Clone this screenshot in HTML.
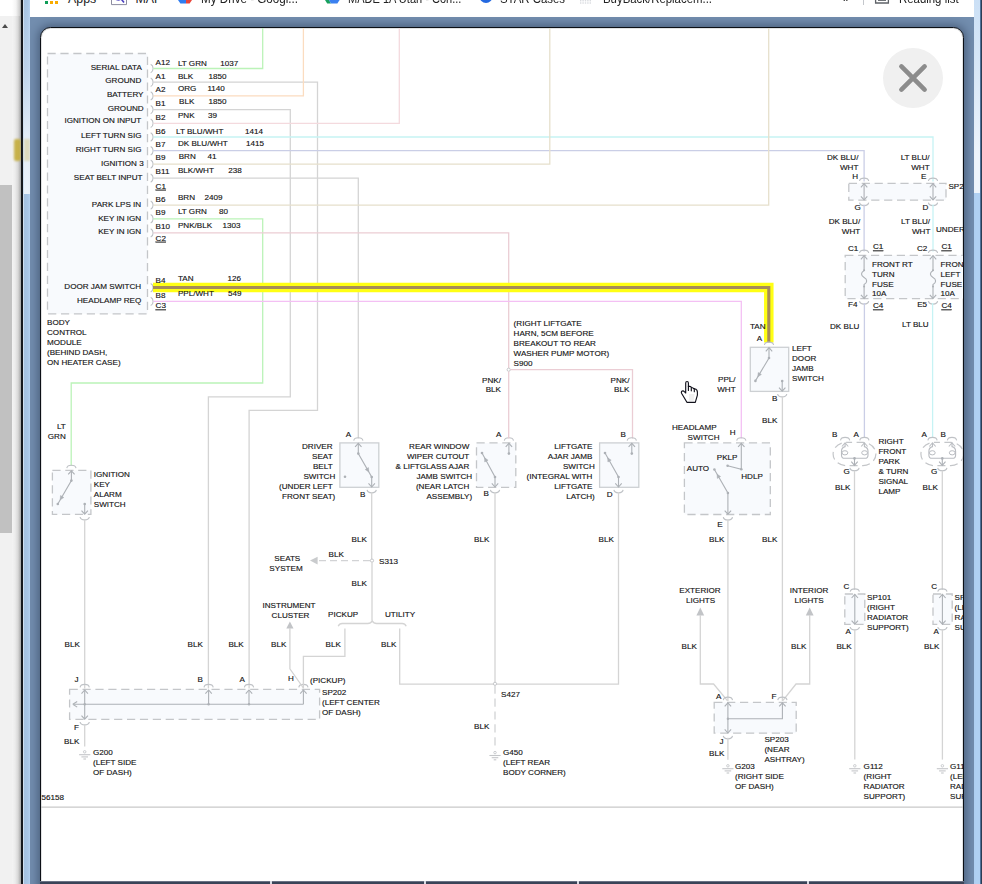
<!DOCTYPE html>
<html lang="en"><head><meta charset="utf-8"><title>Wiring diagram</title>
<style>
html,body{margin:0;padding:0;}
html{width:982px;height:884px;overflow:hidden;}
body{width:982px;height:884px;overflow:hidden;position:relative;background:#fff;font-family:"Liberation Sans",sans-serif;}
#root{position:absolute;left:0;top:0;width:982px;height:884px;overflow:hidden;background:#fff;}
.abs{position:absolute;}
#sb{left:0;top:0;width:14px;height:884px;background:#f1f1f1;}
#sbtop{left:0;top:0;width:21px;height:16px;background:#fff;}
#thumb{left:0;top:185px;width:12px;height:348px;background:#c1c1c1;}
#sbarrow{left:2px;top:23.8px;width:0;height:0;border-left:3.5px solid transparent;border-right:3.5px solid transparent;border-bottom:4px solid #4b4b4b;}
#shadow{left:12px;top:0;width:10px;height:884px;background:linear-gradient(90deg,#f4f4f4 0%,#ececec 30%,#d8d8d8 60%,#a8a8a8 88%,#707070 100%);}
#shadowtop{left:12px;top:0;width:10px;height:16px;background:linear-gradient(90deg,#ffffff 0%,#f4f4f4 40%,#d0d0d0 75%,#808080 100%);}
#yb1{left:14px;top:139px;width:7px;height:22px;background:#c5ad3c;border-radius:2px;filter:blur(1px);opacity:.9;}
#yb2{left:24px;top:139px;width:6px;height:22px;background:#d9cf9a;filter:blur(1px);opacity:.6;}
#wbl{left:21px;top:0;width:2px;height:884px;background:#15181d;}
#frl{left:23px;top:0;width:7px;height:884px;background:linear-gradient(90deg,#e4edf7 0%,#a4c1e0 22%,#a9c6e6 70%,#b6d3f1 100%);}
#frl2{left:24px;top:0;width:6px;height:194px;background:linear-gradient(180deg,rgba(232,240,249,0) 0%,rgba(232,240,249,.35) 35%,rgba(232,240,249,.9) 70%,rgba(235,242,250,1) 100%);}
#page{left:30px;top:0;width:944px;height:884px;background:#728dae;overflow:hidden;}
#bm{left:0;top:0;width:944px;height:17px;background:#fff;overflow:hidden;}
#bm span{position:absolute;top:-8.3px;font-size:12.4px;color:#222;white-space:nowrap;transform:scaleX(.92);transform-origin:0 0;}
#frr{left:973.7px;top:0;width:6.3px;height:884px;background:#b0d0f2;}
#frr2{left:973.7px;top:0;width:6.3px;height:193px;background:linear-gradient(180deg,rgba(236,243,250,.45) 0%,rgba(236,243,250,.7) 40%,rgba(238,244,251,1) 80%);}
#frr3{left:980px;top:0;width:2px;height:884px;background:linear-gradient(90deg,#5f8cbc,#1a2230);}
#modal{left:40px;top:27px;width:922px;height:900px;background:#fff;border:1px solid #0c1016;border-radius:10.5px;box-sizing:content-box;overflow:hidden;box-shadow:inset 0 0 0 1px rgba(12,16,22,.12),0 0 9px 2px rgba(20,32,56,.42);}
#dg{position:absolute;left:-41px;top:-28px;}
#dg text{font-family:"Liberation Sans",sans-serif;font-size:8.1px;fill:#141414;stroke:#141414;stroke-width:.14px;}
#botbar{left:40px;top:881px;width:924px;height:3px;background:linear-gradient(180deg,#8d95a5 0,#3a4458 40%);}
.tick{top:881px;width:2px;height:3px;background:#d8dce4;}
</style></head><body><div id="root">

<div class="abs" id="sb"></div><div class="abs" id="thumb"></div><div class="abs" id="shadow"></div><div class="abs" id="sbtop"></div><div class="abs" id="shadowtop"></div><div class="abs" id="sbarrow"></div>
<div class="abs" id="yb1"></div>
<div class="abs" id="wbl"></div><div class="abs" id="frl"></div><div class="abs" id="frl2"></div><div class="abs" id="yb2"></div>
<div class="abs" id="page"><div class="abs" id="bm">
<i class="abs" style="left:15px;top:1px;width:3.2px;height:3px;background:#0f9d58"></i><i class="abs" style="left:20px;top:1px;width:3.2px;height:3px;background:#f9ab00"></i><i class="abs" style="left:25px;top:1px;width:3.2px;height:3px;background:#f9ab00"></i><span style="left:38px;transform:scaleX(1)">Apps</span><svg class="abs" style="left:80px;top:0" width="18" height="6" viewBox="0 0 18 6"><path d="M1.5 0V4.6H16.5V0" fill="none" stroke="#8d8da0" stroke-width="1"/><path d="M4.5 -2.5a4 4 0 0 0 6.5 1.2L14 2.6" fill="none" stroke="#4a3fc0" stroke-width="1.6"/></svg><span style="left:105.5px;transform:scaleX(1)">MAF</span><svg class="abs" style="left:146px;top:0" width="18" height="5" viewBox="0 0 18 5"><path d="M2 0L4.4 3.6H10V0z" fill="#2f7df0"/><path d="M10 0V3.6H13.6L16 0z" fill="#e9453a"/></svg><span style="left:171px;transform:scaleX(.94)">My Drive - Googl...</span><svg class="abs" style="left:293px;top:0" width="18" height="5" viewBox="0 0 18 5"><path d="M2 0L4.2 3.6H8L6 0z" fill="#18a05e"/><path d="M6 0L8 3.6H14.4L16.6 0z" fill="#3a80f0"/></svg><span style="left:318px;transform:scaleX(.89)">MADE 1A Utah - Con...</span><svg class="abs" style="left:448px;top:0" width="16" height="5" viewBox="0 0 16 5"><circle cx="8" cy="-3.6" r="6.6" fill="#2468e0"/></svg><span style="left:470px">STAR Cases</span><svg class="abs" style="left:547px;top:0" width="18" height="6" viewBox="0 0 18 6"><path d="M3 0.8H15M3 3H15" stroke="#c9ccd2" stroke-width="1" stroke-dasharray="1.4 1"/></svg><span style="left:573px">BuyBack/Replacem...</span><span style="left:813px;top:-9.5px">»</span><i class="abs" style="left:832.6px;top:0;width:1px;height:5px;background:#c4c7cc"></i><svg class="abs" style="left:844px;top:0" width="16" height="5" viewBox="0 0 16 5"><path d="M1.6 0V3H14.4V0" fill="none" stroke="#5f6368" stroke-width="1.3"/><path d="M4 0.4H12" stroke="#5f6368" stroke-width="1"/></svg><span style="left:869px">Reading list</span>
</div></div>
<div class="abs" id="frr"></div><div class="abs" id="frr2"></div><div class="abs" id="frr3"></div>
<div class="abs" id="modal"><svg id="dg" width="982" height="940" viewBox="0 0 982 940">
<rect x="47.5" y="53.5" width="100.0" height="260.3" fill="#f8fafd" stroke="#c4c6c9" stroke-width="1.3" stroke-dasharray="8.2 4.7"/>
<path d="M150.7 64.3 q2.4 1.2 2.4 4.2 q0 3 -2.4 4.2" stroke="#bfc2c6" stroke-width="1.1" fill="none"/>
<path d="M150.7 78.0 q2.4 1.2 2.4 4.2 q0 3 -2.4 4.2" stroke="#bfc2c6" stroke-width="1.1" fill="none"/>
<path d="M150.7 91.7 q2.4 1.2 2.4 4.2 q0 3 -2.4 4.2" stroke="#bfc2c6" stroke-width="1.1" fill="none"/>
<path d="M150.7 105.4 q2.4 1.2 2.4 4.2 q0 3 -2.4 4.2" stroke="#bfc2c6" stroke-width="1.1" fill="none"/>
<path d="M150.7 119.1 q2.4 1.2 2.4 4.2 q0 3 -2.4 4.2" stroke="#bfc2c6" stroke-width="1.1" fill="none"/>
<path d="M150.7 132.8 q2.4 1.2 2.4 4.2 q0 3 -2.4 4.2" stroke="#bfc2c6" stroke-width="1.1" fill="none"/>
<path d="M150.7 146.5 q2.4 1.2 2.4 4.2 q0 3 -2.4 4.2" stroke="#bfc2c6" stroke-width="1.1" fill="none"/>
<path d="M150.7 159.9 q2.4 1.2 2.4 4.2 q0 3 -2.4 4.2" stroke="#bfc2c6" stroke-width="1.1" fill="none"/>
<path d="M150.7 173.9 q2.4 1.2 2.4 4.2 q0 3 -2.4 4.2" stroke="#bfc2c6" stroke-width="1.1" fill="none"/>
<path d="M150.7 200.9 q2.4 1.2 2.4 4.2 q0 3 -2.4 4.2" stroke="#bfc2c6" stroke-width="1.1" fill="none"/>
<path d="M150.7 214.6 q2.4 1.2 2.4 4.2 q0 3 -2.4 4.2" stroke="#bfc2c6" stroke-width="1.1" fill="none"/>
<path d="M150.7 228.7 q2.4 1.2 2.4 4.2 q0 3 -2.4 4.2" stroke="#bfc2c6" stroke-width="1.1" fill="none"/>
<path d="M150.7 283.5 q2.4 1.2 2.4 4.2 q0 3 -2.4 4.2" stroke="#bfc2c6" stroke-width="1.1" fill="none"/>
<path d="M150.7 297.2 q2.4 1.2 2.4 4.2 q0 3 -2.4 4.2" stroke="#bfc2c6" stroke-width="1.1" fill="none"/>
<path d="M153.4 68.5 L262.7 68.5 L262.7 20.0" stroke="#bbf3b8" stroke-width="1.3" fill="none" />
<path d="M153.4 82.2 L317.5 82.2 L317.5 410.4 L249.1 410.4 L249.1 688.5" stroke="#d4d4d4" stroke-width="1.3" fill="none" />
<path d="M153.4 95.9 L303.4 95.9 L303.4 20.0" stroke="#fbdcc0" stroke-width="1.3" fill="none" />
<path d="M153.4 109.6 L290.3 109.6 L290.3 396.9 L208.4 396.9 L208.4 688.5" stroke="#d4d4d4" stroke-width="1.3" fill="none" />
<path d="M153.4 123.3 L399.3 123.3 L399.3 20.0" stroke="#f4dade" stroke-width="1.3" fill="none" />
<path d="M153.4 137.0 L933.0 137.0 L933.0 181.5" stroke="#c6f3f4" stroke-width="1.3" fill="none" />
<path d="M153.4 150.7 L864.1 150.7 L864.1 181.5" stroke="#cacee6" stroke-width="1.3" fill="none" />
<path d="M153.4 164.1 L549.8 164.1 L549.8 20.0" stroke="#e6e0cc" stroke-width="1.3" fill="none" />
<path d="M153.4 178.1 L358.3 178.1 L358.3 438.5" stroke="#d4d4d4" stroke-width="1.3" fill="none" />
<path d="M153.4 205.1 L768.7 205.1 L768.7 20.0" stroke="#e6e0cc" stroke-width="1.3" fill="none" />
<path d="M153.4 218.8 L262.7 218.8 L262.7 383.0 L71.2 383.0 L71.2 466.0" stroke="#bbf3b8" stroke-width="1.3" fill="none" />
<path d="M153.4 232.9 L508.7 232.9 L508.7 368.0" stroke="#ebcdd4" stroke-width="1.3" fill="none" />
<path d="M153.4 301.4 L741.3 301.4 L741.3 438.5" stroke="#f4c0f4" stroke-width="1.3" fill="none" />
<path d="M153.0 287.5 L768.8 287.5 L768.8 342.6" stroke="#ffff14" stroke-width="9.5" fill="none" stroke-linejoin="miter"/>
<path d="M153.0 287.5 L768.8 287.5 L768.8 342.6" stroke="#a68c58" stroke-width="3.1" fill="none" stroke-linejoin="miter"/>
<rect x="52.4" y="470.4" width="38.5" height="44.0" fill="#f8fafd" stroke="#c4c6c9" stroke-width="1.3" stroke-dasharray="8.2 4.7"/>
<path d="M66.8 468.1 q0.5 -2.9 4.6 -2.9 q4.1 0 4.6 2.9" stroke="#bfc2c6" stroke-width="1.15" fill="none"/>
<path d="M68.2 474.4 L71.4 470.8 L74.6 474.4" stroke="#adb1b6" stroke-width="1.1" fill="none"/>
<path d="M71.4 470.8 L71.4 480.6 L57.8 504.0" stroke="#adb1b6" stroke-width="1.1" fill="none" />
<circle cx="71.4" cy="480.6" r="1.3" fill="#adb1b6"/>
<circle cx="57.8" cy="504.0" r="1.3" fill="#adb1b6"/>
<path d="M60.2 499.8 L60.5 495.5 L63.8 497.5 z" fill="#adb1b6" stroke="#adb1b6" stroke-width="0.5"/>
<circle cx="84.7" cy="504.0" r="1.3" fill="#adb1b6"/>
<path d="M84.7 504.0 L84.7 514.0" stroke="#adb1b6" stroke-width="1.1" fill="none" />
<path d="M81.5 510.6 L84.7 514.2 L87.9 510.6" stroke="#adb1b6" stroke-width="1.1" fill="none"/>
<path d="M80.1 517.0 q0.5 2.9 4.6 2.9 q4.1 0 4.6 -2.9" stroke="#bfc2c6" stroke-width="1.15" fill="none"/>
<path d="M84.7 519.0 L84.7 688.5" stroke="#d4d4d4" stroke-width="1.3" fill="none" />
<rect x="69.6" y="689.4" width="250.0" height="30.0" fill="#f8fafd" stroke="#c4c6c9" stroke-width="1.3" stroke-dasharray="8.2 4.7"/>
<path d="M80.1 687.3 q0.5 -2.9 4.6 -2.9 q4.1 0 4.6 2.9" stroke="#bfc2c6" stroke-width="1.15" fill="none"/>
<path d="M81.5 693.6 L84.7 690.0 L87.9 693.6" stroke="#adb1b6" stroke-width="1.1" fill="none"/>
<path d="M84.7 690.0 L84.7 704.3" stroke="#adb1b6" stroke-width="1.1" fill="none" />
<path d="M204.0 687.3 q0.5 -2.9 4.6 -2.9 q4.1 0 4.6 2.9" stroke="#bfc2c6" stroke-width="1.15" fill="none"/>
<path d="M205.4 693.6 L208.6 690.0 L211.8 693.6" stroke="#adb1b6" stroke-width="1.1" fill="none"/>
<path d="M208.6 690.0 L208.6 704.3" stroke="#adb1b6" stroke-width="1.1" fill="none" />
<path d="M244.4 687.3 q0.5 -2.9 4.6 -2.9 q4.1 0 4.6 2.9" stroke="#bfc2c6" stroke-width="1.15" fill="none"/>
<path d="M245.8 693.6 L249.0 690.0 L252.2 693.6" stroke="#adb1b6" stroke-width="1.1" fill="none"/>
<path d="M249.0 690.0 L249.0 704.3" stroke="#adb1b6" stroke-width="1.1" fill="none" />
<path d="M298.8 687.3 q0.5 -2.9 4.6 -2.9 q4.1 0 4.6 2.9" stroke="#bfc2c6" stroke-width="1.15" fill="none"/>
<path d="M300.2 693.6 L303.4 690.0 L306.6 693.6" stroke="#adb1b6" stroke-width="1.1" fill="none"/>
<path d="M303.4 690.0 L303.4 704.3" stroke="#adb1b6" stroke-width="1.1" fill="none" />
<path d="M74.0 704.3 L303.4 704.3" stroke="#adb1b6" stroke-width="1.1" fill="none" />
<path d="M72.8 704.3 l4.4 -2.8 M72.8 704.3 l4.4 2.8" stroke="#adb1b6" stroke-width="1.1" fill="none"/>
<circle cx="84.7" cy="704.3" r="1.2" fill="#adb1b6"/>
<circle cx="208.6" cy="704.3" r="1.2" fill="#adb1b6"/>
<circle cx="249.0" cy="704.3" r="1.2" fill="#adb1b6"/>
<path d="M84.7 704.3 L84.7 719.0" stroke="#adb1b6" stroke-width="1.1" fill="none" />
<path d="M81.5 715.6 L84.7 719.2 L87.9 715.6" stroke="#adb1b6" stroke-width="1.1" fill="none"/>
<path d="M80.1 722.0 q0.5 2.9 4.6 2.9 q4.1 0 4.6 -2.9" stroke="#bfc2c6" stroke-width="1.15" fill="none"/>
<path d="M84.7 724.4 L84.7 746.4" stroke="#d4d4d4" stroke-width="1.3" fill="none" />
<circle cx="84.7" cy="751.8" r="1.25" fill="#fff" stroke="#c4c6c9" stroke-width="0.9"/>
<path d="M79.1 754.7 L90.3 754.7" stroke="#c4c6c9" stroke-width="1.1" fill="none" />
<path d="M81.4 756.9 L88.0 756.9" stroke="#c4c6c9" stroke-width="1.1" fill="none" />
<path d="M83.4 759.0 L86.0 759.0" stroke="#c4c6c9" stroke-width="1.1" fill="none" />
<path d="M289.9 621.4 l3.6 7.2 h-7.2z" fill="#c2c4c7"/>
<path d="M289.9 628.0 L289.9 668.8 L303.4 688.0" stroke="#d4d4d4" stroke-width="1.3" fill="none" />
<path d="M338.2 626.2 q1.2 -2.7 4 -2.7 h25.6 q3 0 4.4 -2.6 q1.4 2.6 4.4 2.6 h25.6 q2.8 0 4 2.7" stroke="#d4d4d4" stroke-width="1.3" fill="none"/>
<path d="M344.9 628.5 L344.9 656.3 L303.4 656.3 L303.4 688.5" stroke="#d4d4d4" stroke-width="1.3" fill="none" />
<path d="M399.7 628.5 L399.7 684.2 L493.4 684.2" stroke="#d4d4d4" stroke-width="1.3" fill="none" />
<rect x="339.9" y="442.9" width="38.9" height="44.4" fill="#f8fafd" stroke="#cdd0d3" stroke-width="1.3"/>
<path d="M353.7 440.6 q0.5 -2.9 4.6 -2.9 q4.1 0 4.6 2.9" stroke="#bfc2c6" stroke-width="1.15" fill="none"/>
<path d="M355.1 446.9 L358.3 443.3 L361.5 446.9" stroke="#adb1b6" stroke-width="1.1" fill="none"/>
<path d="M358.3 443.3 L358.3 453.6 L371.7 477.0 L371.7 486.8" stroke="#adb1b6" stroke-width="1.1" fill="none" />
<circle cx="358.3" cy="453.6" r="1.3" fill="#adb1b6"/>
<circle cx="371.7" cy="477.0" r="1.3" fill="#adb1b6"/>
<circle cx="345.0" cy="476.8" r="1.3" fill="#adb1b6"/>
<path d="M368.8 471.9 L365.2 469.5 L368.5 467.6 z" fill="#adb1b6" stroke="#adb1b6" stroke-width="0.5"/>
<path d="M368.5 483.4 L371.7 487.0 L374.9 483.4" stroke="#adb1b6" stroke-width="1.1" fill="none"/>
<path d="M367.1 489.9 q0.5 2.9 4.6 2.9 q4.1 0 4.6 -2.9" stroke="#bfc2c6" stroke-width="1.15" fill="none"/>
<path d="M371.7 492.0 L371.7 559.0" stroke="#d4d4d4" stroke-width="1.3" fill="none" />
<circle cx="372.0" cy="560.6" r="1.6" fill="#fff" stroke="#c4c6c9" stroke-width="1"/>
<path d="M319.0 560.6 L370.2 560.6" stroke="#d2d3d5" stroke-width="1.3" fill="none" stroke-dasharray="7 4"/>
<path d="M310.0 560.6 l7.6 -3.8 v7.6z" fill="#c9cbcd"/>
<path d="M372.0 562.2 L372.0 620.5" stroke="#d4d4d4" stroke-width="1.3" fill="none" />
<rect x="476.5" y="442.9" width="39.3" height="44.4" fill="#f8fafd" stroke="#c4c6c9" stroke-width="1.3" stroke-dasharray="8.2 4.7"/>
<path d="M504.3 440.6 q0.5 -2.9 4.6 -2.9 q4.1 0 4.6 2.9" stroke="#bfc2c6" stroke-width="1.15" fill="none"/>
<path d="M505.7 446.9 L508.9 443.3 L512.1 446.9" stroke="#adb1b6" stroke-width="1.1" fill="none"/>
<path d="M508.9 443.3 L508.9 453.6" stroke="#adb1b6" stroke-width="1.1" fill="none" />
<circle cx="508.9" cy="453.6" r="1.3" fill="#adb1b6"/>
<circle cx="482.0" cy="453.0" r="1.3" fill="#adb1b6"/>
<circle cx="495.0" cy="477.0" r="1.3" fill="#adb1b6"/>
<path d="M482.0 453.0 L495.0 477.0 L495.0 486.8" stroke="#adb1b6" stroke-width="1.1" fill="none" />
<path d="M484.6 457.8 L488.1 460.2 L484.7 462.0 z" fill="#adb1b6" stroke="#adb1b6" stroke-width="0.5"/>
<path d="M491.8 483.4 L495.0 487.0 L498.2 483.4" stroke="#adb1b6" stroke-width="1.1" fill="none"/>
<path d="M490.4 489.9 q0.5 2.9 4.6 2.9 q4.1 0 4.6 -2.9" stroke="#bfc2c6" stroke-width="1.15" fill="none"/>
<path d="M495.0 492.0 L495.0 682.2" stroke="#d4d4d4" stroke-width="1.3" fill="none" />
<circle cx="508.7" cy="369.7" r="1.6" fill="#fff" stroke="#c4c6c9" stroke-width="1"/>
<path d="M510.4 369.7 L632.5 369.7 L632.5 438.5" stroke="#ebcdd4" stroke-width="1.3" fill="none" />
<path d="M508.7 371.4 L508.7 438.5" stroke="#ebcdd4" stroke-width="1.3" fill="none" />
<rect x="599.6" y="442.9" width="39.2" height="44.4" fill="#f8fafd" stroke="#cdd0d3" stroke-width="1.3"/>
<path d="M627.2 440.6 q0.5 -2.9 4.6 -2.9 q4.1 0 4.6 2.9" stroke="#bfc2c6" stroke-width="1.15" fill="none"/>
<path d="M628.6 446.9 L631.8 443.3 L635.0 446.9" stroke="#adb1b6" stroke-width="1.1" fill="none"/>
<path d="M631.8 443.3 L631.8 453.6" stroke="#adb1b6" stroke-width="1.1" fill="none" />
<circle cx="631.8" cy="453.6" r="1.3" fill="#adb1b6"/>
<circle cx="605.0" cy="453.0" r="1.3" fill="#adb1b6"/>
<circle cx="618.5" cy="477.0" r="1.3" fill="#adb1b6"/>
<path d="M605.0 453.0 L618.5 477.0 L618.5 486.8" stroke="#adb1b6" stroke-width="1.1" fill="none" />
<path d="M607.7 457.8 L611.2 460.2 L607.9 462.0 z" fill="#adb1b6" stroke="#adb1b6" stroke-width="0.5"/>
<path d="M615.3 483.4 L618.5 487.0 L621.7 483.4" stroke="#adb1b6" stroke-width="1.1" fill="none"/>
<path d="M613.9 489.9 q0.5 2.9 4.6 2.9 q4.1 0 4.6 -2.9" stroke="#bfc2c6" stroke-width="1.15" fill="none"/>
<path d="M618.5 492.0 L618.5 684.2 L496.6 684.2" stroke="#d4d4d4" stroke-width="1.3" fill="none" />
<circle cx="495.0" cy="683.8" r="1.6" fill="#fff" stroke="#c4c6c9" stroke-width="1"/>
<path d="M495.0 685.6 L495.0 746.4" stroke="#d2d3d5" stroke-width="1.3" fill="none" stroke-dasharray="8.2 4.7"/>
<circle cx="495.0" cy="752.6" r="1.25" fill="#fff" stroke="#c4c6c9" stroke-width="0.9"/>
<path d="M489.4 755.5 L500.6 755.5" stroke="#c4c6c9" stroke-width="1.1" fill="none" />
<path d="M491.7 757.7 L498.3 757.7" stroke="#c4c6c9" stroke-width="1.1" fill="none" />
<path d="M493.7 759.8 L496.3 759.8" stroke="#c4c6c9" stroke-width="1.1" fill="none" />
<rect x="750.3" y="347.3" width="38.4" height="44.1" fill="#f8fafd" stroke="#cdd0d3" stroke-width="1.3"/>
<path d="M764.4 345.0 q0.5 -2.9 4.6 -2.9 q4.1 0 4.6 2.9" stroke="#bfc2c6" stroke-width="1.15" fill="none"/>
<path d="M765.8 351.3 L769.0 347.7 L772.2 351.3" stroke="#adb1b6" stroke-width="1.1" fill="none"/>
<path d="M769.0 347.7 L769.0 358.0 L755.4 380.9" stroke="#adb1b6" stroke-width="1.1" fill="none" />
<circle cx="769.0" cy="358.0" r="1.3" fill="#adb1b6"/>
<circle cx="755.4" cy="380.9" r="1.3" fill="#adb1b6"/>
<path d="M757.8 376.8 L758.2 372.5 L761.4 374.5 z" fill="#adb1b6" stroke="#adb1b6" stroke-width="0.5"/>
<circle cx="782.2" cy="381.0" r="1.3" fill="#adb1b6"/>
<path d="M782.2 381.0 L782.2 391.0" stroke="#adb1b6" stroke-width="1.1" fill="none" />
<path d="M779.0 387.6 L782.2 391.2 L785.4 387.6" stroke="#adb1b6" stroke-width="1.1" fill="none"/>
<path d="M777.6 394.0 q0.5 2.9 4.6 2.9 q4.1 0 4.6 -2.9" stroke="#bfc2c6" stroke-width="1.15" fill="none"/>
<path d="M782.4 396.0 L782.4 701.0" stroke="#d4d4d4" stroke-width="1.3" fill="none" />
<rect x="684.4" y="442.9" width="85.9" height="71.6" fill="#f8fafd" stroke="#c4c6c9" stroke-width="1.3" stroke-dasharray="8.2 4.7"/>
<path d="M736.7 440.6 q0.5 -2.9 4.6 -2.9 q4.1 0 4.6 2.9" stroke="#bfc2c6" stroke-width="1.15" fill="none"/>
<path d="M738.1 446.9 L741.3 443.3 L744.5 446.9" stroke="#adb1b6" stroke-width="1.1" fill="none"/>
<path d="M741.3 443.3 L741.3 469.3 L727.6 465.8" stroke="#adb1b6" stroke-width="1.1" fill="none" />
<circle cx="741.3" cy="469.3" r="1.3" fill="#adb1b6"/>
<circle cx="727.6" cy="465.8" r="1.3" fill="#adb1b6"/>
<circle cx="714.4" cy="469.5" r="1.3" fill="#adb1b6"/>
<circle cx="727.9" cy="493.0" r="1.3" fill="#adb1b6"/>
<path d="M714.4 469.5 L727.9 493.0 L727.9 514.0" stroke="#adb1b6" stroke-width="1.1" fill="none" />
<path d="M717.1 474.2 L720.6 476.5 L717.3 478.4 z" fill="#adb1b6" stroke="#adb1b6" stroke-width="0.5"/>
<path d="M724.7 510.6 L727.9 514.2 L731.1 510.6" stroke="#adb1b6" stroke-width="1.1" fill="none"/>
<path d="M723.3 517.1 q0.5 2.9 4.6 2.9 q4.1 0 4.6 -2.9" stroke="#bfc2c6" stroke-width="1.15" fill="none"/>
<path d="M727.9 519.2 L727.9 701.0" stroke="#d4d4d4" stroke-width="1.3" fill="none" />
<path d="M700.3 607.6 l3.9 8 h-7.8z" fill="#c2c4c7"/>
<path d="M809.7 607.6 l3.9 8 h-7.8z" fill="#c2c4c7"/>
<path d="M700.3 615.0 L700.3 684.0 L713.6 684.0 L727.4 700.6" stroke="#d4d4d4" stroke-width="1.3" fill="none" />
<path d="M809.7 615.0 L809.7 684.0 L796.0 684.0 L782.8 700.6" stroke="#d4d4d4" stroke-width="1.3" fill="none" />
<rect x="714.2" y="702.4" width="82.0" height="30.8" fill="#f8fafd" stroke="#c4c6c9" stroke-width="1.3" stroke-dasharray="8.2 4.7"/>
<path d="M723.3 700.1 q0.5 -2.9 4.6 -2.9 q4.1 0 4.6 2.9" stroke="#bfc2c6" stroke-width="1.15" fill="none"/>
<path d="M777.8 700.1 q0.5 -2.9 4.6 -2.9 q4.1 0 4.6 2.9" stroke="#bfc2c6" stroke-width="1.15" fill="none"/>
<path d="M724.7 706.4 L727.9 702.8 L731.1 706.4" stroke="#adb1b6" stroke-width="1.1" fill="none"/>
<path d="M779.2 706.4 L782.4 702.8 L785.6 706.4" stroke="#adb1b6" stroke-width="1.1" fill="none"/>
<path d="M782.4 702.8 L782.4 718.8 L727.9 718.8" stroke="#adb1b6" stroke-width="1.1" fill="none" />
<path d="M727.9 702.8 L727.9 732.8" stroke="#adb1b6" stroke-width="1.1" fill="none" />
<circle cx="727.9" cy="718.8" r="1.2" fill="#adb1b6"/>
<path d="M724.7 729.4 L727.9 733.0 L731.1 729.4" stroke="#adb1b6" stroke-width="1.1" fill="none"/>
<path d="M723.3 735.8 q0.5 2.9 4.6 2.9 q4.1 0 4.6 -2.9" stroke="#bfc2c6" stroke-width="1.15" fill="none"/>
<path d="M727.9 737.8 L727.9 759.8" stroke="#d4d4d4" stroke-width="1.3" fill="none" />
<circle cx="727.9" cy="765.8" r="1.25" fill="#fff" stroke="#c4c6c9" stroke-width="0.9"/>
<path d="M722.3 768.7 L733.5 768.7" stroke="#c4c6c9" stroke-width="1.1" fill="none" />
<path d="M724.6 770.9 L731.2 770.9" stroke="#c4c6c9" stroke-width="1.1" fill="none" />
<path d="M726.6 773.0 L729.2 773.0" stroke="#c4c6c9" stroke-width="1.1" fill="none" />
<rect x="848.8" y="183.3" width="97.2" height="16.8" fill="#f8fafd" stroke="#c4c6c9" stroke-width="1.3" stroke-dasharray="8.2 4.7"/>
<path d="M859.5 181.0 q0.5 -2.9 4.6 -2.9 q4.1 0 4.6 2.9" stroke="#bfc2c6" stroke-width="1.15" fill="none"/>
<path d="M859.5 202.7 q0.5 2.9 4.6 2.9 q4.1 0 4.6 -2.9" stroke="#bfc2c6" stroke-width="1.15" fill="none"/>
<path d="M860.9 187.3 L864.1 183.7 L867.3 187.3" stroke="#adb1b6" stroke-width="1.1" fill="none"/>
<path d="M860.9 196.3 L864.1 199.9 L867.3 196.3" stroke="#adb1b6" stroke-width="1.1" fill="none"/>
<path d="M864.1 183.7 L864.1 199.9" stroke="#adb1b6" stroke-width="1.1" fill="none" />
<path d="M928.4 181.0 q0.5 -2.9 4.6 -2.9 q4.1 0 4.6 2.9" stroke="#bfc2c6" stroke-width="1.15" fill="none"/>
<path d="M928.4 202.7 q0.5 2.9 4.6 2.9 q4.1 0 4.6 -2.9" stroke="#bfc2c6" stroke-width="1.15" fill="none"/>
<path d="M929.8 187.3 L933.0 183.7 L936.2 187.3" stroke="#adb1b6" stroke-width="1.1" fill="none"/>
<path d="M929.8 196.3 L933.0 199.9 L936.2 196.3" stroke="#adb1b6" stroke-width="1.1" fill="none"/>
<path d="M933.0 183.7 L933.0 199.9" stroke="#adb1b6" stroke-width="1.1" fill="none" />
<path d="M864.1 204.4 L864.1 251.6" stroke="#cacee6" stroke-width="1.3" fill="none" />
<path d="M933.0 204.4 L933.0 251.6" stroke="#c6f3f4" stroke-width="1.3" fill="none" />
<rect x="845.2" y="255.3" width="144.8" height="43.3" fill="#f8fafd" stroke="#c4c6c9" stroke-width="1.3" stroke-dasharray="8.2 4.7"/>
<path d="M859.5 253.0 q0.5 -2.9 4.6 -2.9 q4.1 0 4.6 2.9" stroke="#bfc2c6" stroke-width="1.15" fill="none"/>
<path d="M859.5 301.2 q0.5 2.9 4.6 2.9 q4.1 0 4.6 -2.9" stroke="#bfc2c6" stroke-width="1.15" fill="none"/>
<path d="M860.9 259.3 L864.1 255.7 L867.3 259.3" stroke="#adb1b6" stroke-width="1.1" fill="none"/>
<path d="M860.9 294.8 L864.1 298.4 L867.3 294.8" stroke="#adb1b6" stroke-width="1.1" fill="none"/>
<circle cx="864.1" cy="270.3" r="1.0" fill="#adb1b6"/>
<circle cx="864.1" cy="286.6" r="1.0" fill="#adb1b6"/>
<path d="M864.1 255.7 V270.5 q-2.6 1.6 -2.6 3.6 q0 2 2.6 3.4 q2.6 1.4 2.6 3.4 q0 2 -2.6 3.6 V298.4" stroke="#adb1b6" stroke-width="1.1" fill="none"/>
<path d="M928.4 253.0 q0.5 -2.9 4.6 -2.9 q4.1 0 4.6 2.9" stroke="#bfc2c6" stroke-width="1.15" fill="none"/>
<path d="M928.4 301.2 q0.5 2.9 4.6 2.9 q4.1 0 4.6 -2.9" stroke="#bfc2c6" stroke-width="1.15" fill="none"/>
<path d="M929.8 259.3 L933.0 255.7 L936.2 259.3" stroke="#adb1b6" stroke-width="1.1" fill="none"/>
<path d="M929.8 294.8 L933.0 298.4 L936.2 294.8" stroke="#adb1b6" stroke-width="1.1" fill="none"/>
<circle cx="933.0" cy="270.3" r="1.0" fill="#adb1b6"/>
<circle cx="933.0" cy="286.6" r="1.0" fill="#adb1b6"/>
<path d="M933.0 255.7 V270.5 q-2.6 1.6 -2.6 3.6 q0 2 2.6 3.4 q2.6 1.4 2.6 3.4 q0 2 -2.6 3.6 V298.4" stroke="#adb1b6" stroke-width="1.1" fill="none"/>
<path d="M864.4 303.0 L864.4 438.0" stroke="#cacee6" stroke-width="1.3" fill="none" />
<path d="M932.6 303.0 L932.6 438.0" stroke="#c6f3f4" stroke-width="1.3" fill="none" />
<rect x="833.1" y="442.4" width="42.8" height="23.2" rx="13" ry="11.6" fill="none" stroke="#c4c6c9" stroke-width="1.2" stroke-dasharray="8 4.5" stroke-dashoffset="2"/>
<path d="M840.5 440.3 q0.5 -2.9 4.6 -2.9 q4.1 0 4.6 2.9" stroke="#bfc2c6" stroke-width="1.15" fill="none"/>
<path d="M841.9 446.5 L845.1 442.9 L848.3 446.5" stroke="#bfc2c6" stroke-width="1.1" fill="none"/>
<path d="M859.8 440.3 q0.5 -2.9 4.6 -2.9 q4.1 0 4.6 2.9" stroke="#bfc2c6" stroke-width="1.15" fill="none"/>
<path d="M861.2 446.5 L864.4 442.9 L867.6 446.5" stroke="#bfc2c6" stroke-width="1.1" fill="none"/>
<path d="M845.1 442.9 V446.6 Q841.5 447.6 841.5 451.2 V455.2 Q841.5 458.3 844.7 458.3 H864.8 Q868.0 458.3 868.0 455.2 V451.2 Q868.0 447.6 864.4 446.6 V442.9" stroke="#b9bcc1" stroke-width="1.1" fill="none"/>
<ellipse cx="844.9" cy="452.8" rx="2.9" ry="2.1" fill="none" stroke="#b9bcc1" stroke-width="1"/>
<ellipse cx="864.6" cy="452.8" rx="2.9" ry="2.1" fill="none" stroke="#b9bcc1" stroke-width="1"/>
<circle cx="854.5" cy="458.4" r="1.3" fill="#adb1b6"/>
<path d="M854.5 458.4 L854.5 465.0" stroke="#adb1b6" stroke-width="1.1" fill="none" />
<path d="M851.3 461.7 L854.5 465.3 L857.7 461.7" stroke="#adb1b6" stroke-width="1.1" fill="none"/>
<path d="M849.9 467.8 q0.5 2.9 4.6 2.9 q4.1 0 4.6 -2.9" stroke="#bfc2c6" stroke-width="1.15" fill="none"/>
<rect x="920.9" y="442.4" width="42.8" height="23.2" rx="13" ry="11.6" fill="none" stroke="#c4c6c9" stroke-width="1.2" stroke-dasharray="8 4.5" stroke-dashoffset="2"/>
<path d="M927.9 440.3 q0.5 -2.9 4.6 -2.9 q4.1 0 4.6 2.9" stroke="#bfc2c6" stroke-width="1.15" fill="none"/>
<path d="M929.3 446.5 L932.5 442.9 L935.7 446.5" stroke="#bfc2c6" stroke-width="1.1" fill="none"/>
<path d="M947.4 440.3 q0.5 -2.9 4.6 -2.9 q4.1 0 4.6 2.9" stroke="#bfc2c6" stroke-width="1.15" fill="none"/>
<path d="M948.8 446.5 L952.0 442.9 L955.2 446.5" stroke="#bfc2c6" stroke-width="1.1" fill="none"/>
<path d="M932.5 442.9 V446.6 Q928.9 447.6 928.9 451.2 V455.2 Q928.9 458.3 932.1 458.3 H952.4 Q955.6 458.3 955.6 455.2 V451.2 Q955.6 447.6 952.0 446.6 V442.9" stroke="#b9bcc1" stroke-width="1.1" fill="none"/>
<ellipse cx="932.3" cy="452.8" rx="2.9" ry="2.1" fill="none" stroke="#b9bcc1" stroke-width="1"/>
<ellipse cx="952.2" cy="452.8" rx="2.9" ry="2.1" fill="none" stroke="#b9bcc1" stroke-width="1"/>
<circle cx="942.3" cy="458.4" r="1.3" fill="#adb1b6"/>
<path d="M942.3 458.4 L942.3 465.0" stroke="#adb1b6" stroke-width="1.1" fill="none" />
<path d="M939.1 461.7 L942.3 465.3 L945.5 461.7" stroke="#adb1b6" stroke-width="1.1" fill="none"/>
<path d="M937.7 467.8 q0.5 2.9 4.6 2.9 q4.1 0 4.6 -2.9" stroke="#bfc2c6" stroke-width="1.15" fill="none"/>
<path d="M854.5 470.6 L854.5 590.0" stroke="#d4d4d4" stroke-width="1.3" fill="none" />
<path d="M942.3 470.6 L942.3 590.0" stroke="#d4d4d4" stroke-width="1.3" fill="none" />
<rect x="844.8" y="594.0" width="20.0" height="30.4" fill="#f8fafd" stroke="#c4c6c9" stroke-width="1.3" stroke-dasharray="8.2 4.7"/>
<path d="M850.2 591.7 q0.5 -2.9 4.6 -2.9 q4.1 0 4.6 2.9" stroke="#bfc2c6" stroke-width="1.15" fill="none"/>
<path d="M850.2 627.0 q0.5 2.9 4.6 2.9 q4.1 0 4.6 -2.9" stroke="#bfc2c6" stroke-width="1.15" fill="none"/>
<path d="M851.6 598.0 L854.8 594.4 L858.0 598.0" stroke="#adb1b6" stroke-width="1.1" fill="none"/>
<path d="M851.6 620.6 L854.8 624.2 L858.0 620.6" stroke="#adb1b6" stroke-width="1.1" fill="none"/>
<path d="M854.8 594.4 L854.8 624.2" stroke="#adb1b6" stroke-width="1.1" fill="none" />
<path d="M854.8 629.2 L854.8 759.6" stroke="#d4d4d4" stroke-width="1.3" fill="none" />
<circle cx="854.8" cy="765.8" r="1.25" fill="#fff" stroke="#c4c6c9" stroke-width="0.9"/>
<path d="M849.2 768.7 L860.4 768.7" stroke="#c4c6c9" stroke-width="1.1" fill="none" />
<path d="M851.5 770.9 L858.1 770.9" stroke="#c4c6c9" stroke-width="1.1" fill="none" />
<path d="M853.5 773.0 L856.1 773.0" stroke="#c4c6c9" stroke-width="1.1" fill="none" />
<rect x="933.0" y="594.0" width="19.2" height="30.4" fill="#f8fafd" stroke="#c4c6c9" stroke-width="1.3" stroke-dasharray="8.2 4.7"/>
<path d="M937.8 591.7 q0.5 -2.9 4.6 -2.9 q4.1 0 4.6 2.9" stroke="#bfc2c6" stroke-width="1.15" fill="none"/>
<path d="M937.8 627.0 q0.5 2.9 4.6 2.9 q4.1 0 4.6 -2.9" stroke="#bfc2c6" stroke-width="1.15" fill="none"/>
<path d="M939.2 598.0 L942.4 594.4 L945.6 598.0" stroke="#adb1b6" stroke-width="1.1" fill="none"/>
<path d="M939.2 620.6 L942.4 624.2 L945.6 620.6" stroke="#adb1b6" stroke-width="1.1" fill="none"/>
<path d="M942.4 594.4 L942.4 624.2" stroke="#adb1b6" stroke-width="1.1" fill="none" />
<path d="M942.4 629.2 L942.4 759.6" stroke="#d4d4d4" stroke-width="1.3" fill="none" />
<circle cx="942.4" cy="765.8" r="1.25" fill="#fff" stroke="#c4c6c9" stroke-width="0.9"/>
<path d="M936.8 768.7 L948.0 768.7" stroke="#c4c6c9" stroke-width="1.1" fill="none" />
<path d="M939.1 770.9 L945.7 770.9" stroke="#c4c6c9" stroke-width="1.1" fill="none" />
<path d="M941.1 773.0 L943.7 773.0" stroke="#c4c6c9" stroke-width="1.1" fill="none" />
<path d="M41 807.2 H965" stroke="#c9c9c9" stroke-width="1.3"/>
<text x="141.8" y="69.6" text-anchor="end">SERIAL DATA</text>
<text x="155.6" y="65.1">A12</text>
<text x="177.9" y="66.0">LT GRN</text>
<text x="220.3" y="66.0">1037</text>
<text x="141.3" y="82.5" text-anchor="end">GROUND</text>
<text x="155.6" y="78.8">A1</text>
<text x="177.9" y="78.6">BLK</text>
<text x="208.6" y="78.6">1850</text>
<text x="143.5" y="97.3" text-anchor="end">BATTERY</text>
<text x="155.6" y="91.8">A2</text>
<text x="177.9" y="90.8">ORG</text>
<text x="207.4" y="90.8">1140</text>
<text x="143.7" y="110.5" text-anchor="end">GROUND</text>
<text x="155.6" y="105.5">B1</text>
<text x="179.0" y="103.8">BLK</text>
<text x="208.6" y="103.8">1850</text>
<text x="141.3" y="123.4" text-anchor="end">IGNITION ON INPUT</text>
<text x="155.6" y="119.5">B2</text>
<text x="177.9" y="118.4">PNK</text>
<text x="208.0" y="118.4">39</text>
<text x="141.5" y="137.5" text-anchor="end">LEFT TURN SIG</text>
<text x="155.6" y="133.7">B6</text>
<text x="176.0" y="133.7">LT BLU/WHT</text>
<text x="245.1" y="133.7">1414</text>
<text x="141.5" y="151.6" text-anchor="end">RIGHT TURN SIG</text>
<text x="155.6" y="146.6">B7</text>
<text x="177.9" y="146.2">DK BLU/WHT</text>
<text x="245.9" y="146.2">1415</text>
<text x="143.7" y="165.5" text-anchor="end">IGNITION 3</text>
<text x="155.6" y="160.3">B9</text>
<text x="178.7" y="158.7">BRN</text>
<text x="207.4" y="158.7">41</text>
<text x="142.5" y="179.6" text-anchor="end">SEAT BELT INPUT</text>
<text x="155.6" y="174.4">B11</text>
<text x="177.9" y="172.9">BLK/WHT</text>
<text x="228.2" y="172.9">238</text>
<text x="141.2" y="206.5" text-anchor="end">PARK LPS IN</text>
<text x="155.6" y="201.8">B6</text>
<text x="177.9" y="199.6">BRN</text>
<text x="204.4" y="199.6">2409</text>
<text x="141.2" y="220.6" text-anchor="end">KEY IN IGN</text>
<text x="155.6" y="215.3">B9</text>
<text x="177.9" y="213.8">LT GRN</text>
<text x="219.1" y="213.8">80</text>
<text x="141.2" y="233.7" text-anchor="end">KEY IN IGN</text>
<text x="155.6" y="228.7">B10</text>
<text x="177.9" y="227.5">PNK/BLK</text>
<text x="222.5" y="227.5">1303</text>
<text x="141.2" y="288.5" text-anchor="end">DOOR JAM SWITCH</text>
<text x="155.6" y="283.0">B4</text>
<text x="177.9" y="281.2">TAN</text>
<text x="227.5" y="281.2">126</text>
<text x="141.2" y="302.5" text-anchor="end">HEADLAMP REQ</text>
<text x="155.6" y="297.8">B8</text>
<text x="177.9" y="295.6">PPL/WHT</text>
<text x="227.9" y="295.6">549</text>
<text x="155.6" y="188.7" text-decoration="underline">C1</text>
<text x="155.6" y="240.7" text-decoration="underline">C2</text>
<text x="155.6" y="308.4" text-decoration="underline">C3</text>
<text x="47.0" y="325.2">BODY</text>
<text x="47.0" y="335.2">CONTROL</text>
<text x="47.0" y="345.2">MODULE</text>
<text x="47.0" y="355.2">(BEHIND DASH,</text>
<text x="47.0" y="365.2">ON HEATER CASE)</text>
<text x="65.8" y="428.8" text-anchor="end">LT</text>
<text x="65.8" y="438.6" text-anchor="end">GRN</text>
<text x="93.8" y="477.2">IGNITION</text>
<text x="93.8" y="487.2">KEY</text>
<text x="93.8" y="497.2">ALARM</text>
<text x="93.8" y="507.2">SWITCH</text>
<text x="64.5" y="647.2">BLK</text>
<text x="187.6" y="647.4">BLK</text>
<text x="228.4" y="647.4">BLK</text>
<text x="74.5" y="682.0">J</text>
<text x="197.5" y="682.0">B</text>
<text x="239.5" y="682.0">A</text>
<text x="288.0" y="681.4">H</text>
<text x="74.0" y="729.6">F</text>
<text x="64.0" y="744.0">BLK</text>
<text x="93.0" y="754.8">G200</text>
<text x="93.0" y="764.8">(LEFT SIDE</text>
<text x="93.0" y="774.8">OF DASH)</text>
<text x="310.0" y="682.6">(PICKUP)</text>
<text x="322.0" y="694.8">SP202</text>
<text x="322.0" y="704.8">(LEFT CENTER</text>
<text x="322.0" y="714.8">OF DASH)</text>
<text x="41.4" y="799.8" font-size="8">56158</text>
<text x="289.0" y="608.0" text-anchor="middle">INSTRUMENT</text>
<text x="290.5" y="618.2" text-anchor="middle">CLUSTER</text>
<text x="271.0" y="647.2">BLK</text>
<text x="328.0" y="617.0">PICKUP</text>
<text x="385.0" y="617.0">UTILITY</text>
<text x="325.5" y="647.2">BLK</text>
<text x="381.0" y="647.2">BLK</text>
<text x="332.6" y="448.9" text-anchor="end">DRIVER</text>
<text x="332.6" y="458.9" text-anchor="end">SEAT</text>
<text x="332.6" y="468.9" text-anchor="end">BELT</text>
<text x="335.3" y="478.9" text-anchor="end">SWITCH</text>
<text x="332.6" y="488.9" text-anchor="end">(UNDER LEFT</text>
<text x="335.3" y="498.8" text-anchor="end">FRONT SEAT)</text>
<text x="345.8" y="436.6">A</text>
<text x="360.0" y="497.2">B</text>
<text x="351.5" y="542.4">BLK</text>
<text x="379.0" y="563.6">S313</text>
<text x="328.5" y="556.8">BLK</text>
<text x="287.3" y="561.0" text-anchor="middle">SEATS</text>
<text x="286.0" y="571.0" text-anchor="middle">SYSTEM</text>
<text x="351.5" y="585.6">BLK</text>
<text x="469.3" y="448.7" text-anchor="end">REAR WINDOW</text>
<text x="469.3" y="458.7" text-anchor="end">WIPER CUTOUT</text>
<text x="469.3" y="468.7" text-anchor="end">&amp; LIFTGLASS AJAR</text>
<text x="472.2" y="478.7" text-anchor="end">JAMB SWITCH</text>
<text x="469.3" y="488.7" text-anchor="end">(NEAR LATCH</text>
<text x="472.2" y="498.8" text-anchor="end">ASSEMBLY)</text>
<text x="496.0" y="437.0">A</text>
<text x="483.5" y="496.4">B</text>
<text x="474.0" y="542.4">BLK</text>
<text x="513.6" y="326.2">(RIGHT LIFTGATE</text>
<text x="513.6" y="336.2">HARN, 5CM BEFORE</text>
<text x="513.6" y="346.2">BREAKOUT TO REAR</text>
<text x="513.6" y="356.2">WASHER PUMP MOTOR)</text>
<text x="513.6" y="366.2">S900</text>
<text x="501.0" y="383.0" text-anchor="end">PNK/</text>
<text x="501.0" y="391.9" text-anchor="end">BLK</text>
<text x="629.4" y="383.0" text-anchor="end">PNK/</text>
<text x="629.4" y="391.9" text-anchor="end">BLK</text>
<text x="592.4" y="449.0" text-anchor="end">LIFTGATE</text>
<text x="592.4" y="458.9" text-anchor="end">AJAR JAMB</text>
<text x="594.8" y="469.0" text-anchor="end">SWITCH</text>
<text x="592.4" y="478.6" text-anchor="end">(INTEGRAL WITH</text>
<text x="592.4" y="488.7" text-anchor="end">LIFTGATE</text>
<text x="594.8" y="498.9" text-anchor="end">LATCH)</text>
<text x="620.5" y="437.0">B</text>
<text x="606.8" y="496.8">D</text>
<text x="598.5" y="542.4">BLK</text>
<text x="501.0" y="697.0">S427</text>
<text x="474.0" y="729.0">BLK</text>
<text x="503.0" y="755.2">G450</text>
<text x="503.0" y="765.2">(LEFT REAR</text>
<text x="503.0" y="775.2">BODY CORNER)</text>
<text x="750.0" y="329.0">TAN</text>
<text x="756.8" y="341.4">A</text>
<text x="792.0" y="351.0">LEFT</text>
<text x="792.0" y="361.0">DOOR</text>
<text x="792.0" y="371.0">JAMB</text>
<text x="792.0" y="381.0">SWITCH</text>
<text x="772.0" y="401.0">B</text>
<text x="762.0" y="423.0">BLK</text>
<text x="762.0" y="542.4">BLK</text>
<text x="735.6" y="382.0" text-anchor="end">PPL/</text>
<text x="735.6" y="392.2" text-anchor="end">WHT</text>
<text x="672.0" y="430.2">HEADLAMP</text>
<text x="687.6" y="440.2">SWITCH</text>
<text x="729.8" y="435.0">H</text>
<text x="716.8" y="460.2">PKLP</text>
<text x="686.8" y="471.0">AUTO</text>
<text x="741.2" y="479.2">HDLP</text>
<text x="717.2" y="527.0">E</text>
<text x="709.0" y="542.4">BLK</text>
<text x="700.0" y="593.0" text-anchor="middle">EXTERIOR</text>
<text x="700.5" y="603.0" text-anchor="middle">LIGHTS</text>
<text x="809.0" y="593.0" text-anchor="middle">INTERIOR</text>
<text x="809.0" y="603.0" text-anchor="middle">LIGHTS</text>
<text x="681.5" y="649.0">BLK</text>
<text x="791.0" y="649.0">BLK</text>
<text x="716.0" y="699.2">A</text>
<text x="771.6" y="699.2">F</text>
<text x="719.6" y="744.2">J</text>
<text x="709.0" y="756.0">BLK</text>
<text x="764.4" y="742.0">SP203</text>
<text x="764.4" y="752.0">(NEAR</text>
<text x="764.4" y="762.0">ASHTRAY)</text>
<text x="735.0" y="769.0">G203</text>
<text x="735.0" y="779.0">(RIGHT SIDE</text>
<text x="735.0" y="789.0">OF DASH)</text>
<text x="858.4" y="160.0" text-anchor="end">DK BLU/</text>
<text x="858.4" y="170.0" text-anchor="end">WHT</text>
<text x="858.0" y="178.8" text-anchor="end">H</text>
<text x="929.6" y="160.0" text-anchor="end">LT BLU/</text>
<text x="929.6" y="170.0" text-anchor="end">WHT</text>
<text x="926.4" y="178.8" text-anchor="end">E</text>
<text x="948.4" y="189.2">SP2</text>
<text x="854.4" y="210.4">G</text>
<text x="922.4" y="210.4">D</text>
<text x="860.2" y="223.8" text-anchor="end">DK BLU/</text>
<text x="860.2" y="233.8" text-anchor="end">WHT</text>
<text x="930.0" y="223.8" text-anchor="end">LT BLU/</text>
<text x="930.4" y="233.8" text-anchor="end">WHT</text>
<text x="936.0" y="232.0">UNDER</text>
<text x="848.0" y="251.2">C1</text>
<text x="873.0" y="249.4" text-decoration="underline">C1</text>
<text x="917.0" y="251.2">C2</text>
<text x="941.4" y="249.4" text-decoration="underline">C1</text>
<text x="872.0" y="267.0">FRONT RT</text>
<text x="872.0" y="276.8">TURN</text>
<text x="872.0" y="286.6">FUSE</text>
<text x="872.0" y="296.4">10A</text>
<text x="940.6" y="267.0">FRONT</text>
<text x="940.6" y="276.8">LEFT</text>
<text x="940.6" y="286.6">FUSE</text>
<text x="940.6" y="296.4">10A</text>
<text x="848.0" y="307.2">F4</text>
<text x="873.0" y="308.4" text-decoration="underline">C4</text>
<text x="917.2" y="307.2">E5</text>
<text x="941.4" y="308.4" text-decoration="underline">C4</text>
<text x="830.0" y="329.0">DK BLU</text>
<text x="902.0" y="327.2">LT BLU</text>
<text x="832.0" y="437.0">B</text>
<text x="853.6" y="437.0">A</text>
<text x="921.6" y="437.0">A</text>
<text x="940.4" y="437.0">B</text>
<text x="843.6" y="474.0">G</text>
<text x="931.0" y="474.0">G</text>
<text x="835.0" y="489.6">BLK</text>
<text x="922.6" y="489.6">BLK</text>
<text x="878.4" y="444.0">RIGHT</text>
<text x="878.4" y="453.9">FRONT</text>
<text x="878.4" y="463.8">PARK</text>
<text x="878.4" y="473.7">&amp; TURN</text>
<text x="878.4" y="483.6">SIGNAL</text>
<text x="878.4" y="493.5">LAMP</text>
<text x="843.4" y="588.5">C</text>
<text x="931.2" y="588.5">C</text>
<text x="845.6" y="633.5">A</text>
<text x="933.4" y="633.5">A</text>
<text x="836.4" y="648.7">BLK</text>
<text x="924.0" y="648.7">BLK</text>
<text x="867.0" y="600.0">SP101</text>
<text x="867.0" y="610.0">(RIGHT</text>
<text x="867.0" y="620.0">RADIATOR</text>
<text x="867.0" y="630.0">SUPPORT)</text>
<text x="954.6" y="600.0">SP100</text>
<text x="954.6" y="610.0">(LEFT</text>
<text x="954.6" y="620.0">RADIATOR</text>
<text x="954.6" y="630.0">SUPPORT)</text>
<text x="863.6" y="769.0">G112</text>
<text x="863.6" y="779.0">(RIGHT</text>
<text x="863.6" y="789.0">RADIATOR</text>
<text x="863.6" y="799.0">SUPPORT)</text>
<text x="950.0" y="769.0">G111</text>
<text x="950.0" y="779.0">(LEFT</text>
<text x="950.0" y="789.0">RADIATOR</text>
<text x="950.0" y="799.0">SUPPORT)</text>
<g stroke="#12121c" stroke-width="1.15" fill="#fff" stroke-linejoin="round" stroke-linecap="round"><path d="M685.7 393 V383.1 q0 -1.6 1.35 -1.6 q1.35 0 1.35 1.6 V386.4 h1.3 q1.5 0.1 1.7 1.1 q1.7 0 2.1 1.1 q0.5 -0.2 1.3 0.1 q2.6 0.8 2.6 3.3 V395.2 L695.3 402.3 H686.9 L681.7 393.5 q-0.9 -1.7 0.5 -2.4 q1.2 -0.5 2.2 0.6 z"/><path d="M688.4 386.4 V390.4 M691.3 387.5 V390.8 M694.3 388.7 V391.7" fill="none"/></g>
<path d="M689 394 L694.5 394 L693.6 401 L689 401z" fill="#e9e9e9" opacity=".7"/>
<circle cx="913" cy="78" r="30" fill="#f0f0f0"/>
<path d="M901.4 66.4 L924.6 89.6 M924.6 66.4 L901.4 89.6" stroke="#8c8c8c" stroke-width="4.6" stroke-linecap="round"/>
</svg></div>
<div class="abs" id="botbar"></div>
<div class="abs tick" style="left:270px"></div>
<div class="abs tick" style="left:423.5px"></div>
<div class="abs tick" style="left:576.5px"></div>
<div class="abs tick" style="left:807px"></div>
</div></body></html>
